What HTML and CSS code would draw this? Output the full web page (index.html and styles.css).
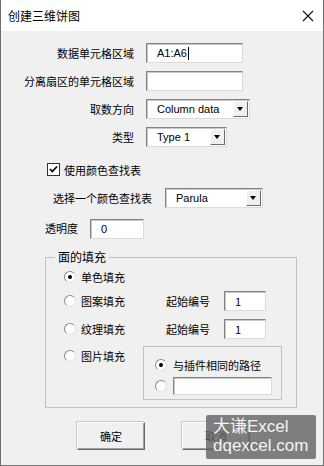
FILE: index.html
```html
<!DOCTYPE html>
<html lang="zh-CN">
<head>
    <meta charset="UTF-8">
    <meta name="viewport" content="width=device-width, initial-scale=1.0">
    <title>创建三维饼图</title>
    <link rel="stylesheet" href="styles.css">
</head>
<body>
    <div class="window">
        <div class="titlebar">
            <span class="title">创建三维饼图</span>
            <svg class="close" width="12" height="12" viewBox="0 0 12 12">
                <path d="M1 1 L11 11 M11 1 L1 11" stroke="#111" stroke-width="1.1" fill="none"/>
            </svg>
        </div>

        <div class="content">
            <div class="row">
                <span class="lbl">数据单元格区域</span>
                <div class="field w-range">A1:A6<span class="caret"></span></div>
            </div>
            <div class="row">
                <span class="lbl">分离扇区的单元格区域</span>
                <div class="field w-range"></div>
            </div>
            <div class="row">
                <span class="lbl">取数方向</span>
                <div class="combo w-dir"><span class="combo-text">Column data</span><span class="arrow"></span></div>
            </div>
            <div class="row">
                <span class="lbl">类型</span>
                <div class="combo w-type"><span class="combo-text">Type 1</span><span class="arrow"></span></div>
            </div>

            <div class="check-row">
                <span class="checkbox">
                    <svg width="11" height="11" viewBox="0 0 11 11">
                        <path d="M2 5 L4.3 7.5 L9 2.5" stroke="#000" stroke-width="1.6" fill="none"/>
                    </svg>
                </span>
                <span>使用颜色查找表</span>
            </div>

            <div class="map-row">
                <span class="map-lbl">选择一个颜色查找表</span>
                <div class="combo w-map"><span class="combo-text">Parula</span><span class="arrow"></span></div>
            </div>

            <div class="alpha-row">
                <span class="alpha-lbl">透明度</span>
                <div class="field w-alpha">0</div>
            </div>

            <fieldset class="group">
                <legend>面的填充</legend>
                <div class="opt-row first">
                    <span class="opt"><span class="radio on"></span>单色填充</span>
                </div>
                <div class="opt-row second">
                    <span class="opt"><span class="radio"></span>图案填充</span>
                    <span class="start-lbl">起始编号</span>
                    <div class="field w-num">1</div>
                </div>
                <div class="opt-row third">
                    <span class="opt"><span class="radio"></span>纹理填充</span>
                    <span class="start-lbl">起始编号</span>
                    <div class="field w-num">1</div>
                </div>
                <div class="pic-row">
                    <span class="opt pic-opt"><span class="radio"></span>图片填充</span>
                    <div class="inner-box">
                        <div class="inner-row">
                            <span class="radio on"></span>
                            <span>与插件相同的路径</span>
                        </div>
                        <div class="inner-row path">
                            <span class="radio"></span>
                            <div class="field w-path"></div>
                        </div>
                    </div>
                </div>
            </fieldset>

            <div class="buttons">
                <button type="button" class="btn">确定</button>
                <button type="button" class="btn">取消</button>
            </div>
        </div>

        <div class="watermark">大谦Excel<br>dqexcel.com</div>
    </div>
</body>
</html>
```

FILE: styles.css
```css
body {
    margin: 0;
    padding: 0;
    background-color: #f0f0f0;
    font-family: "Liberation Sans", "Noto Sans CJK SC", sans-serif;
    font-size: 11px;
    color: #000;
}
.window {
    position: relative;
    width: 324px;
    height: 466px;
    box-sizing: border-box;
    border: 1px solid #707070;
    border-top: none;
    background-color: #f0f0f0;
    overflow: hidden;
}
.titlebar {
    height: 31px;
    background-color: #fff;
    display: flex;
    align-items: center;
    justify-content: space-between;
    padding: 0 9px 0 7px;
}
.title {
    font-family: "Noto Sans CJK SC", sans-serif;
    font-size: 12px;
    line-height: 16px;
}
.close {
    display: block;
}
.content {
    padding-top: 12px;
}

/* text boxes and combos */
.field {
    height: 20px;
    box-sizing: border-box;
    background-color: #fff;
    border: 1px solid;
    border-color: #838383 #dadada #dadada #838383;
    box-shadow: inset 1px 1px 0 #c8c8c8;
    padding-left: 10px;
    line-height: 18px;
    display: flex;
    align-items: center;
}
.caret {
    display: inline-block;
    width: 1px;
    height: 13px;
    background-color: #000;
    margin-left: 1px;
}
.combo {
    height: 20px;
    box-sizing: border-box;
    background-color: #fff;
    border: 1px solid;
    border-color: #838383 #dadada #dadada #838383;
    box-shadow: inset 1px 1px 0 #c8c8c8;
    display: flex;
    align-items: center;
    justify-content: space-between;
    padding: 1px 1px 1px 10px;
}
.combo-text {
    line-height: 16px;
}
.arrow {
    width: 15px;
    height: 16px;
    box-sizing: border-box;
    background-color: #f0f0f0;
    border: 1px solid;
    border-color: #fff #6a6a6a #6a6a6a #fff;
    position: relative;
}
.arrow::after {
    content: "";
    position: absolute;
    left: 3px;
    top: 5px;
    border-left: 3.5px solid transparent;
    border-right: 3.5px solid transparent;
    border-top: 4px solid #000;
}
.w-range { width: 97px; }
.w-dir { width: 104px; }
.w-type { width: 81px; }
.w-map { width: 98px; }
.w-alpha { width: 54px; }
.w-num { width: 42px; }
.w-path { width: 99px; height: 18px; }

/* top rows */
.row {
    display: flex;
    align-items: center;
    height: 20px;
    margin-bottom: 8px;
}
.lbl {
    width: 133px;
    text-align: right;
    margin-right: 12px;
    font-family: "Noto Sans CJK SC", sans-serif;
}
.check-row {
    display: flex;
    align-items: center;
    height: 13px;
    margin: 16px 0 0 46px;
    font-family: "Noto Sans CJK SC", sans-serif;
}
.checkbox {
    width: 13px;
    height: 13px;
    box-sizing: border-box;
    background-color: #fff;
    border: 1px solid #333;
    margin-right: 4px;
    display: flex;
    align-items: center;
    justify-content: center;
}
.checkbox svg {
    display: block;
}
.map-row {
    display: flex;
    align-items: center;
    height: 20px;
    margin-top: 12px;
}
.map-lbl {
    width: 112px;
    margin-left: 52px;
    font-family: "Noto Sans CJK SC", sans-serif;
}
.alpha-row {
    display: flex;
    align-items: center;
    height: 20px;
    margin-top: 11px;
}
.alpha-lbl {
    width: 45px;
    margin-left: 44px;
    padding-bottom: 3px;
    font-family: "Noto Sans CJK SC", sans-serif;
}

/* group box */
.group {
    margin: 11px 0 0 44px;
    width: 252px;
    box-sizing: border-box;
    border: 1px solid #c2c2c2;
    padding: 3px 0 7px 18px;
    font-family: "Noto Sans CJK SC", sans-serif;
}
.group legend {
    font-size: 12px;
    line-height: 14px;
    padding: 0 3px;
    margin-left: -9px;
}
.opt-row {
    display: flex;
    align-items: center;
    height: 20px;
}
.opt-row.second {
    margin-top: 4px;
}
.opt-row.third {
    margin-top: 8px;
}
.opt {
    display: flex;
    align-items: center;
    width: 102px;
}
.radio {
    width: 12px;
    height: 12px;
    box-sizing: border-box;
    border-radius: 50%;
    background-color: #fff;
    border: 1px solid;
    border-color: #8a8a8a #e0e0e0 #e0e0e0 #8a8a8a;
    margin-right: 5px;
    position: relative;
    flex-shrink: 0;
}
.radio.on::after {
    content: "";
    position: absolute;
    left: 3px;
    top: 3px;
    width: 4px;
    height: 4px;
    border-radius: 50%;
    background-color: #000;
}
.start-lbl {
    width: 58px;
}
.pic-row {
    display: flex;
    margin-top: 7px;
}
.pic-opt {
    width: 79px;
    height: 20px;
    align-self: flex-start;
}
.inner-box {
    width: 139px;
    box-sizing: border-box;
    border: 1px solid #c2c2c2;
    padding: 10px 0 4px 11px;
}
.inner-row {
    display: flex;
    align-items: center;
    height: 16px;
}
.inner-row.path {
    height: 18px;
    margin-top: 4px;
}
.inner-row .radio {
    margin-right: 6px;
}

/* buttons */
.buttons {
    display: flex;
    gap: 37px;
    margin: 14px 0 0 76px;
}
.btn {
    width: 68px;
    height: 28px;
    padding: 0;
    background-color: #f0f0f0;
    border: 1px solid;
    border-color: #fff #696969 #696969 #fff;
    box-shadow: inset -1px -1px 0 #a0a0a0, -1px -1px 0 #c8c8c8;
    font-family: "Noto Sans CJK SC", sans-serif;
    font-size: 11px;
    color: #000;
}

/* site watermark on top of the dialog */
.watermark {
    position: absolute;
    left: 205px;
    top: 415px;
    width: 110px;
    height: 44px;
    box-sizing: border-box;
    padding: 2px 0 0 7px;
    background-color: rgba(100, 100, 100, 0.82);
    border-radius: 2px;
    color: #f4f4f4;
    font-family: "Liberation Sans", "Noto Sans CJK SC", sans-serif;
    font-size: 17px;
    line-height: 19px;
}
```
